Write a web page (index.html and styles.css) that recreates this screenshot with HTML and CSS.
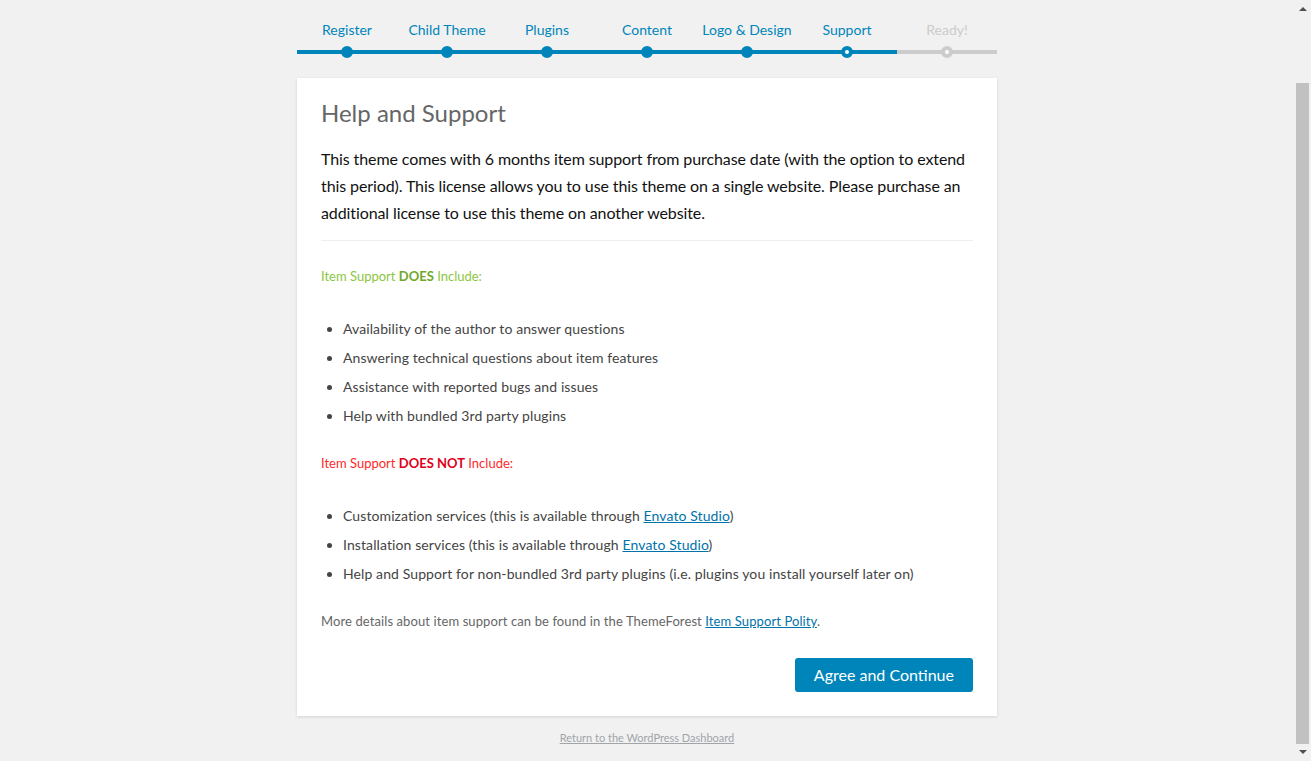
FILE: index.html
```html
<!DOCTYPE html>
<html lang="en">
<head>
<meta charset="utf-8">
<title>Theme Setup - Help and Support</title>
<link rel="stylesheet" href="styles.css">
</head>
<body>
<div class="wrap">
  <ol class="steps">
    <li class="done">Register</li>
    <li class="done">Child Theme</li>
    <li class="done">Plugins</li>
    <li class="done">Content</li>
    <li class="done">Logo &amp; Design</li>
    <li class="active">Support</li>
    <li>Ready!</li>
  </ol>
  <div class="card">
    <h1 class="title">Help and Support</h1>
    <p class="intro">This theme comes with 6 months item support from purchase date (with the option to extend this period). This license allows you to use this theme on a single website. Please purchase an additional license to use this theme on another website.</p>
    <hr class="sep">
    <p class="note note-yes">Item Support <strong>DOES</strong> Include:</p>
    <ul class="list">
      <li>Availability of the author to answer questions</li>
      <li>Answering technical questions about item features</li>
      <li>Assistance with reported bugs and issues</li>
      <li>Help with bundled 3rd party plugins</li>
    </ul>
    <p class="note note-no">Item Support <strong>DOES NOT</strong> Include:</p>
    <ul class="list">
      <li>Customization services (this is available through <a href="#">Envato Studio</a>)</li>
      <li>Installation services (this is available through <a href="#">Envato Studio</a>)</li>
      <li>Help and Support for non-bundled 3rd party plugins (i.e. plugins you install yourself later on)</li>
    </ul>
    <p class="more">More details about item support can be found in the ThemeForest <a href="#">Item Support Polity</a>.</p>
    <div class="actions">
      <a class="button" href="#">Agree and Continue</a>
    </div>
  </div>
  <p class="footer"><a href="#">Return to the WordPress Dashboard</a></p>
</div>
<div class="scrollbar" aria-hidden="true">
  <span class="arrow arrow-up"></span>
  <span class="track"><span class="thumb"></span></span>
  <span class="arrow arrow-down"></span>
</div>
</body>
</html>
```
FILE: styles.css
```css
html, body {
  margin: 0;
  padding: 0;
}
body {
  background: #f1f1f1;
  font-family: "Lato", "Noto Sans", sans-serif;
  color: #444;
  padding-right: 17px;
}
.wrap {
  width: 700px;
  margin: 0 auto;
}
.steps {
  list-style: none;
  margin: 0;
  padding: 20px 0 24px;
  display: flex;
}
.steps li {
  flex: 0 0 100px;
  text-align: center;
  position: relative;
  font-size: 14px;
  line-height: 20px;
  padding-bottom: 10px;
  border-bottom: 4px solid #ccc;
  color: #ccc;
}
.steps li::before {
  content: "";
  position: absolute;
  left: 50%;
  bottom: -8px;
  margin-left: -6px;
  width: 4px;
  height: 4px;
  border: 4px solid #ccc;
  border-radius: 50%;
  background: #fff;
}
.steps li.done,
.steps li.active {
  color: #0085ba;
  border-color: #0085ba;
}
.steps li.done::before {
  border-color: #0085ba;
  background: #0085ba;
}
.steps li.active::before {
  border-color: #0085ba;
}
.card {
  background: #fff;
  box-shadow: 0 1px 3px rgba(0, 0, 0, 0.13);
  padding: 18px 24px 24px;
}
.title {
  margin: 0;
  font-size: 24px;
  line-height: 33px;
  font-weight: 400;
  color: #666;
}
.intro {
  margin: 16px 0 14px;
  font-size: 16px;
  line-height: 27px;
  letter-spacing: -0.1px;
  color: #111;
}
.sep {
  margin: 0;
  border: 0;
  border-top: 1px solid #eee;
}
.note {
  margin: 25px 0 0;
  font-size: 13px;
  line-height: 20px;
}
.note-yes {
  color: #8cc63f;
}
.note-yes strong {
  color: #6fa82a;
}
.note-no {
  margin-top: 23px;
  color: #ff2a2a;
}
.note-no strong {
  color: #e0001b;
}
.list {
  margin: 28px 0 0;
  padding: 0 0 0 22px;
  font-size: 14px;
  line-height: 29px;
  letter-spacing: 0.1px;
  color: #444;
}
.list a,
.more a {
  color: #0073aa;
}
.more {
  margin: 23px 0 0;
  font-size: 13px;
  line-height: 20px;
  letter-spacing: 0.1px;
  color: #666;
}
.actions {
  display: flex;
  justify-content: flex-end;
  margin-top: 27px;
}
.button {
  display: block;
  background: #0085ba;
  color: #fff;
  text-decoration: none;
  font-size: 16px;
  line-height: 34px;
  height: 34px;
  padding: 0 19px;
  border-radius: 3px;
}
.footer {
  margin: 14px 0 0;
  text-align: center;
  font-size: 11px;
  line-height: 16px;
}
.footer a {
  color: #a0a5aa;
}
.scrollbar {
  position: fixed;
  top: 0;
  right: 0;
  bottom: 0;
  width: 15px;
  background: #f1f1f1;
  display: flex;
  flex-direction: column;
}
.arrow {
  flex: 0 0 17px;
  position: relative;
}
.arrow::after {
  content: "";
  position: absolute;
  left: 3px;
  border-left: 4px solid transparent;
  border-right: 4px solid transparent;
}
.arrow-up::after {
  top: 7px;
  border-bottom: 4px solid #505050;
}
.arrow-down::after {
  bottom: 7px;
  border-top: 4px solid #505050;
}
.track {
  flex: 1;
  display: flex;
  flex-direction: column;
  justify-content: flex-end;
}
.thumb {
  display: block;
  height: 661px;
  margin-right: 2px;
  background: #c1c1c1;
}
```
